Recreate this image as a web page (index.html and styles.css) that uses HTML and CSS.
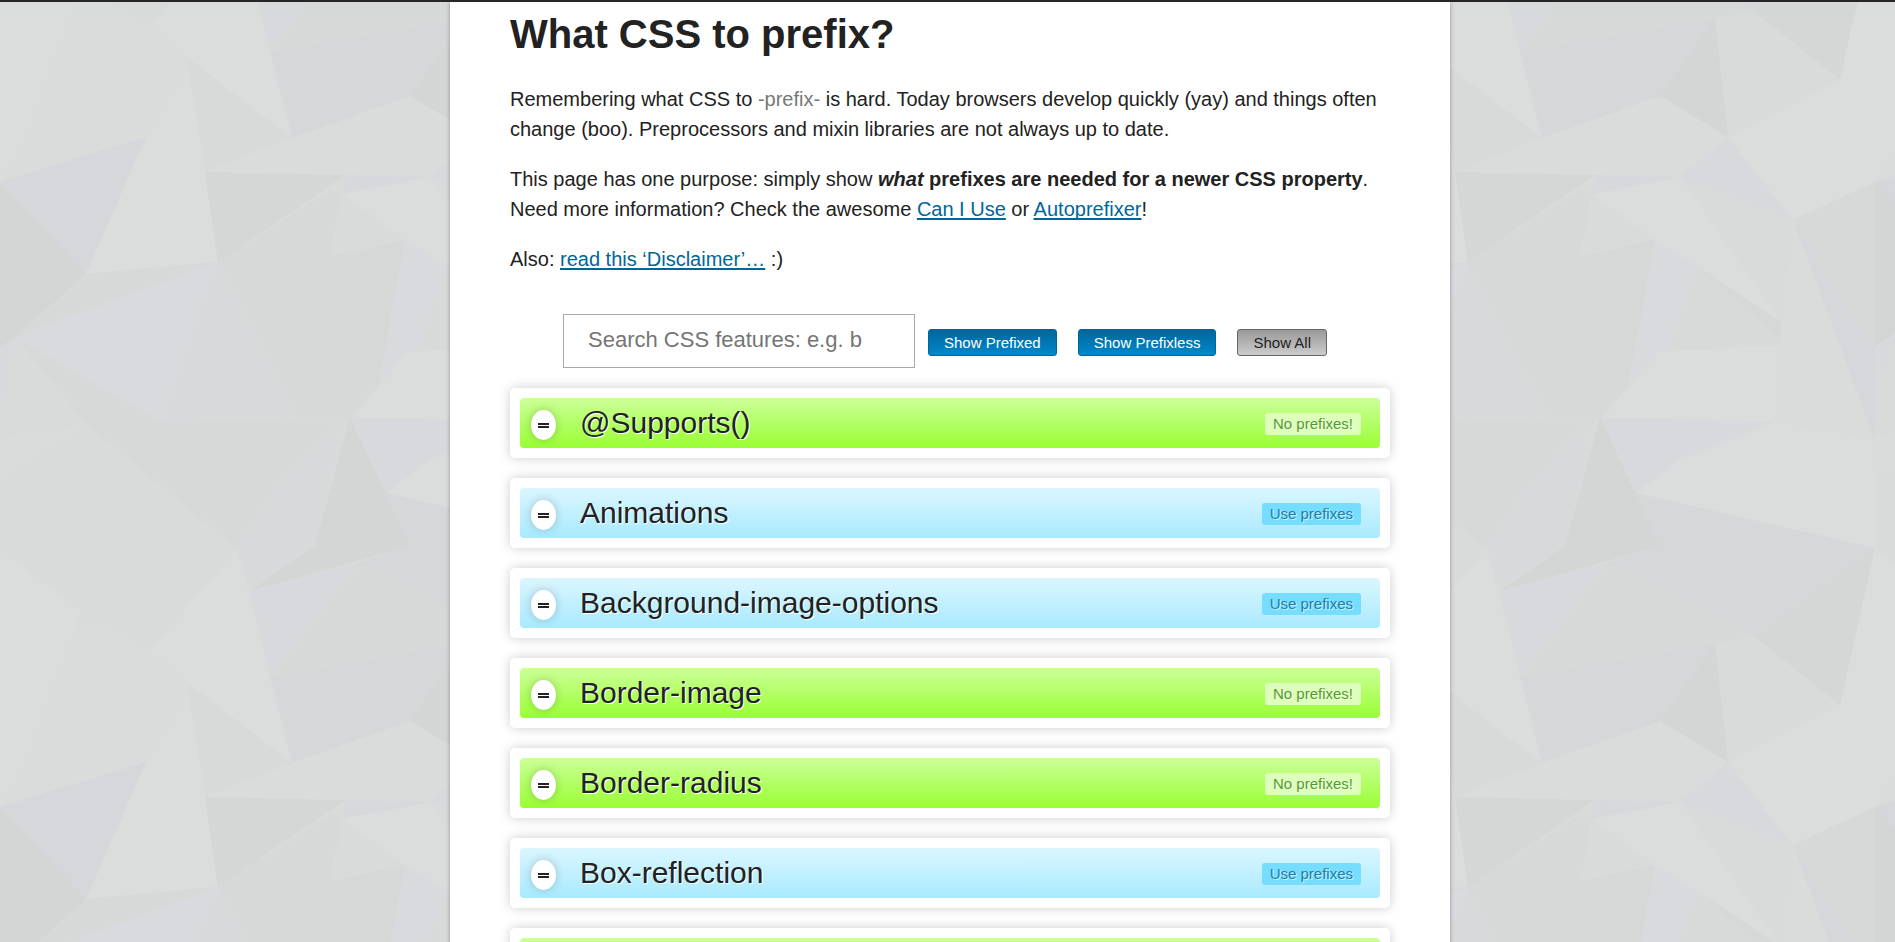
FILE: index.html
```html
<!DOCTYPE html>
<html lang="en">
<head>
<meta charset="utf-8">
<title>What CSS to prefix?</title>
<link rel="stylesheet" href="styles.css">
</head>
<body>
<svg class="backdrop" aria-hidden="true">
  <defs>
    <g id="facets">
      <path fill="#dadcdb" d="M0 0H250L292 138L205 172L146 137L0 182Z"/>
      <path fill="#dbdddc" d="M0 0H75L25 140L0 182Z"/>
      <path fill="#dadcdb" d="M88 425L237 549L150 650L0 550V437Z"/>
      <path fill="#d9dbda" d="M88 425L237 549L150 650L80 610L0 550V480Z"/>
      <path fill="#dbdddc" d="M0 550L82 611L40 720L0 760Z"/>
      <path fill="#d6d7da" d="M0 182L146 137L86 274Z"/>
      <path fill="#d4d6d5" d="M0 182L86 274L15 337L0 347Z"/>
      <path fill="#d8d9dc" d="M0 347L15 337L0 430Z"/>
      <path fill="#dbdddc" d="M146 137L190 65L203 160L218 262L86 274Z"/>
      <path fill="#d7d9d8" d="M86 274L218 262L15 337Z"/>
      <path fill="#d9dadd" d="M15 337L218 262L162 422Z"/>
      <path fill="#d8d9db" d="M218 262L297 417L162 422Z"/>
      <path fill="#d7d9d8" d="M218 262L330 190L342 194L330 257L378 387L350 417L297 417Z"/>
      <path fill="#d5d7d6" d="M205 172L345 175L218 262Z"/>
      <path fill="#d8dad9" d="M187 57L292 138L205 172Z"/>
      <path fill="#dbdddc" d="M237 549L270 677L292 763L187 682L150 650Z"/>
      <path fill="#d8d9dc" d="M250 591L358 563L270 677Z"/>
      <path fill="#d7d9d8" d="M358 563L505 637L465 643L270 677Z"/>
      <path fill="#d6d7d9" d="M270 52L465 18L410 96L292 138Z"/>
      <path fill="#d4d6d5" d="M465 18L478 137L410 96Z"/>
      <path fill="#d9dbda" d="M465 18L500 12L590 80L478 137Z"/>
      <path fill="#d5d7d6" d="M505 637L625 548L590 705Z"/>
      <path fill="#dbdddc" d="M625 548L590 705L478 762L543 845L625 807Z"/>
      <path fill="#dadcdb" d="M410 96L478 137L430 177L205 172L292 138Z"/>
      <path fill="#d8d9dc" d="M478 137L430 177L543 220Z"/>
      <path fill="#d7d8db" d="M345 175L430 177L342 194Z"/>
      <path fill="#d9dbda" d="M430 177L543 220L532 323Z"/>
      <path fill="#dbdddc" d="M342 194L430 177L532 323L452 269L405 240Z"/>
      <path fill="#d9dbda" d="M342 194L405 240L330 257Z"/>
      <path fill="#d6d8d7" d="M405 240L378 387L330 257Z"/>
      <path fill="#d9dadd" d="M405 240L448 267L418 352L378 387Z"/>
      <path fill="#d8dad9" d="M448 267L532 341V345L418 352Z"/>
      <path fill="#d6d8d7" d="M452 269L532 323V341Z"/>
      <path fill="#dadcdb" d="M532 323L543 220L625 440V548L525 422Z"/>
      <path fill="#dbdddc" d="M378 387L408 352L530 345L525 422H350Z"/>
      <path fill="#d7d9d8" d="M543 220L625 182V350Z"/>
      <path fill="#d6d7da" d="M543 220L625 350V440Z"/>
      <path fill="#d7d9d8" d="M15 337L162 422L350 417L297 471L237 549L88 425Z"/>
      <path fill="#d8d9db" d="M342 420L315 546L250 591L237 549L280 485Z"/>
      <path fill="#dbdddc" d="M350 417L525 422L625 440V548L386 493Z"/>
      <path fill="#d8d9dc" d="M350 417L525 422L430 460L386 493Z"/>
      <path fill="#dbdddc" d="M386 493L460 455L540 425L625 440V548Z"/>
      <path fill="#d6d7d9" d="M386 493L625 548L505 637L358 563L410 546Z"/>
      <path fill="#d4d6d5" d="M350 417L410 546L250 591L315 546Z"/>
    </g>
    <pattern id="tile" width="625" height="625" patternUnits="userSpaceOnUse">
      <rect width="625" height="625" fill="#d9dbda"/>
      <use href="#facets"/>
      <use href="#facets" y="-625"/>
    </pattern>
  </defs>
  <rect width="100%" height="100%" fill="url(#tile)"/>
</svg>

<main class="page">
  <h1 class="title">What CSS to prefix?</h1>
  <p class="text">Remembering what CSS to <span class="muted">-prefix-</span> is hard. Today browsers develop quickly (yay) and things often change (boo). Preprocessors and mixin libraries are not always up to date.</p>
  <p class="text">This page has one purpose: simply show <strong><em>what</em> prefixes are needed for a newer CSS property</strong>. Need more information? Check the awesome <a class="link" href="#caniuse">Can I Use</a> or <a class="link" href="#autoprefixer">Autoprefixer</a>!</p>
  <p class="text">Also: <a class="link" href="#disclaimer">read this ‘Disclaimer’…</a> :)</p>

  <form class="filters">
    <input class="search" type="text" aria-label="Search CSS features" placeholder="Search CSS features: e.g. b">
    <div class="buttons">
      <button class="button" type="button">Show Prefixed</button>
      <button class="button" type="button">Show Prefixless</button>
      <button class="button button-all" type="button">Show All</button>
    </div>
  </form>

  <ul class="features">
    <li class="card"><div class="bar bar-free"><button class="toggle" type="button" aria-label="Toggle @Supports()"></button><h2 class="name">@Supports()</h2><span class="badge">No prefixes!</span></div></li>
    <li class="card"><div class="bar"><button class="toggle" type="button" aria-label="Toggle Animations"></button><h2 class="name">Animations</h2><span class="badge">Use prefixes</span></div></li>
    <li class="card"><div class="bar"><button class="toggle" type="button" aria-label="Toggle Background-image-options"></button><h2 class="name">Background-image-options</h2><span class="badge">Use prefixes</span></div></li>
    <li class="card"><div class="bar bar-free"><button class="toggle" type="button" aria-label="Toggle Border-image"></button><h2 class="name">Border-image</h2><span class="badge">No prefixes!</span></div></li>
    <li class="card"><div class="bar bar-free"><button class="toggle" type="button" aria-label="Toggle Border-radius"></button><h2 class="name">Border-radius</h2><span class="badge">No prefixes!</span></div></li>
    <li class="card"><div class="bar"><button class="toggle" type="button" aria-label="Toggle Box-reflection"></button><h2 class="name">Box-reflection</h2><span class="badge">Use prefixes</span></div></li>
    <li class="card"><div class="bar bar-free"></div></li>
  </ul>
</main>
</body>
</html>
```
FILE: styles.css
```css
* {
  box-sizing: border-box;
}

html {
  scrollbar-width: none;
}

body {
  position: relative;
  margin: 0;
  padding-left: 5px;
  border-top: 2px solid #272525;
  background: #d9dbda;
  color: #222;
  font: 20px/30px "Liberation Sans", Arial, sans-serif;
}

.backdrop {
  position: absolute;
  top: -2px;
  left: 0;
  z-index: -1;
  width: 100%;
  height: 100%;
}

.page {
  max-width: 1000px;
  margin: 0 auto;
  padding: 8px 60px 40px;
  background: #fff;
  box-shadow: 0 0 4px rgba(0, 0, 0, 0.35);
}

.title {
  margin: 0 0 26px;
  font-size: 40px;
  line-height: 48px;
}

.text {
  margin: 0 0 20px;
}

.muted {
  color: #777;
}

.link {
  color: #069;
  text-decoration-thickness: 2px;
  text-underline-offset: 2px;
  text-decoration-skip-ink: none;
}

.filters {
  display: flex;
  justify-content: center;
  align-items: center;
  gap: 13px;
  margin: 40px 0 20px;
  padding-right: 10px;
}

.search {
  width: 352px;
  height: 54px;
  padding: 0 24px 2px;
  border: 1px solid #a9a9a9;
  background: #fff;
  color: #222;
  font: 22px "Liberation Sans", Arial, sans-serif;
}

.search::placeholder {
  color: #757575;
}

.buttons {
  display: flex;
  gap: 21px;
  padding-top: 3px;
}

.button {
  height: 27px;
  padding: 0 15px;
  border: 1px solid #069;
  border-radius: 3px;
  background: linear-gradient(#069, #08c);
  color: #fff;
  font: 15px "Liberation Sans", Arial, sans-serif;
}

.button-all {
  border-color: #666;
  background: linear-gradient(#999, #ccc);
  color: #222;
}

.features {
  display: grid;
  gap: 20px;
  margin: 0;
  padding: 0;
  list-style: none;
}

.card {
  padding: 10px;
  border-radius: 5px;
  background: #fff;
  box-shadow: 0 0 12px rgba(0, 0, 0, 0.2);
}

.bar {
  display: flex;
  align-items: center;
  min-height: 50px;
  padding: 0 19px 0 11px;
  border-radius: 4px;
  background: linear-gradient(#dbf6ff, #a8eaff);
}

.bar-free {
  background: linear-gradient(#cf9, #9f3);
}

.toggle {
  display: grid;
  place-items: center;
  width: 25px;
  height: 30px;
  margin: 4px 24px 0 0;
  padding: 0;
  border: 0;
  border-radius: 50%;
  background: #fff;
  box-shadow: 0 0 10px rgba(0, 0, 0, 0.2);
}

.toggle::before {
  content: "";
  width: 11px;
  height: 1px;
  border: solid #222;
  border-width: 2px 0;
}

.name {
  flex: 1;
  margin: 0;
  font-size: 30px;
  font-weight: normal;
  line-height: 50px;
  text-shadow: 1px 1px 0 #fff;
}

.badge {
  margin-top: 2px;
  padding: 0 8px;
  border-radius: 3px;
  background: #7df;
  color: #2480a4;
  font-size: 15px;
  line-height: 22px;
  text-shadow: 1px 1px 0 rgba(255, 255, 255, 0.6);
}

.bar-free .badge {
  background: #dfb;
  color: #593;
}
```
